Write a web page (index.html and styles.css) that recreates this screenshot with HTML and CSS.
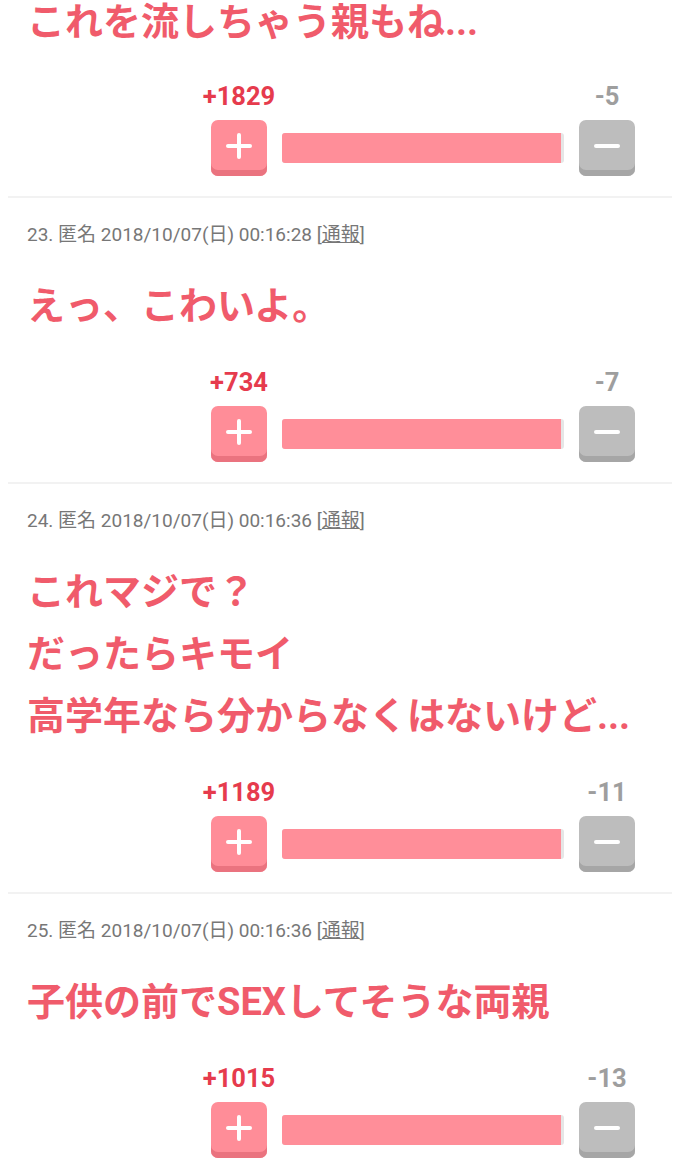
FILE: index.html
```html
<!DOCTYPE html>
<html lang="ja">
<head>
    <meta charset="UTF-8">
    <meta name="viewport" content="width=device-width, initial-scale=1.0">
    <title>コメント</title>
    <link rel="stylesheet" href="styles.css">
</head>
<body>

    <ul class="comments">

        <li class="comment comment-cut">
            <div class="body">これを流しちゃう親もね...</div>
            <div class="vote">
                <div class="vote-col">
                    <span class="count plus">+1829</span>
                    <button class="btn btn-plus"><span class="sign"></span></button>
                </div>
                <div class="bar"><div class="bar-fill" style="width: 99%"></div></div>
                <div class="vote-col">
                    <span class="count minus">-5</span>
                    <button class="btn btn-minus"><span class="sign"></span></button>
                </div>
            </div>
        </li>

        <li class="comment">
            <p class="meta">23. 匿名 2018/10/07(日) 00:16:28 [<a href="#">通報</a>]</p>
            <div class="body">えっ、こわいよ。</div>
            <div class="vote">
                <div class="vote-col">
                    <span class="count plus">+734</span>
                    <button class="btn btn-plus"><span class="sign"></span></button>
                </div>
                <div class="bar"><div class="bar-fill" style="width: 99%"></div></div>
                <div class="vote-col">
                    <span class="count minus">-7</span>
                    <button class="btn btn-minus"><span class="sign"></span></button>
                </div>
            </div>
        </li>

        <li class="comment">
            <p class="meta">24. 匿名 2018/10/07(日) 00:16:36 [<a href="#">通報</a>]</p>
            <div class="body">
                これマジで？<br>
                だったらキモイ<br>
                高学年なら分からなくはないけど...
            </div>
            <div class="vote">
                <div class="vote-col">
                    <span class="count plus">+1189</span>
                    <button class="btn btn-plus"><span class="sign"></span></button>
                </div>
                <div class="bar"><div class="bar-fill" style="width: 99%"></div></div>
                <div class="vote-col">
                    <span class="count minus">-11</span>
                    <button class="btn btn-minus"><span class="sign"></span></button>
                </div>
            </div>
        </li>

        <li class="comment">
            <p class="meta">25. 匿名 2018/10/07(日) 00:16:36 [<a href="#">通報</a>]</p>
            <div class="body">子供の前でSEXしてそうな両親</div>
            <div class="vote">
                <div class="vote-col">
                    <span class="count plus">+1015</span>
                    <button class="btn btn-plus"><span class="sign"></span></button>
                </div>
                <div class="bar"><div class="bar-fill" style="width: 99%"></div></div>
                <div class="vote-col">
                    <span class="count minus">-13</span>
                    <button class="btn btn-minus"><span class="sign"></span></button>
                </div>
            </div>
        </li>

    </ul>

</body>
</html>
```

FILE: styles.css
```css
body {
    background-color: #fff;
    margin: 0;
    font-family: Roboto, "Noto Sans CJK JP", sans-serif;
}

.comments {
    list-style: none;
    margin: 0 8px;
    padding: 0;
}

.comment {
    padding: 25px 0 20px 19px;
    border-bottom: 2px solid #f2f2f2;
}

.comment-cut {
    padding-top: 0;
}

.meta {
    margin: 0;
    font-size: 19px;
    line-height: 24px;
    color: #777;
}

.meta a {
    color: #777;
}

.body {
    margin: 28px 0 30px;
    font-family: Roboto, "Noto Sans CJK JP", sans-serif;
    font-weight: 700;
    font-size: 38px;
    line-height: 62px;
    color: #f05b6b;
}

.comment-cut .body {
    margin: 0 0 37px;
    line-height: 44px;
}

.vote {
    display: flex;
    align-items: flex-end;
    gap: 15px;
    width: 424px;
    margin-left: auto;
    margin-right: 37px;
}

.vote-col {
    width: 56px;
    flex-shrink: 0;
    display: flex;
    flex-direction: column;
    align-items: center;
    gap: 9px;
}

.count {
    font-family: Roboto, sans-serif;
    font-weight: 700;
    font-size: 25.5px;
    line-height: 30px;
    white-space: nowrap;
}

.count.plus {
    color: #e63b4d;
}

.count.minus {
    color: #9e9e9e;
}

.btn {
    position: relative;
    width: 56px;
    height: 56px;
    border: 0;
    border-radius: 7px;
    padding: 0;
}

.btn-plus {
    background-color: #ff8d98;
    box-shadow: inset 0 -6px 0 #ea737f;
}

.btn-minus {
    background-color: #bdbdbd;
    box-shadow: inset 0 -6px 0 #a6a6a6;
}

.sign {
    position: absolute;
    left: 15px;
    top: 24px;
    width: 26px;
    height: 3.5px;
    border-radius: 2px;
    background-color: #fff;
}

.btn-plus .sign::after {
    content: "";
    position: absolute;
    left: 11.25px;
    top: -11.25px;
    width: 3.5px;
    height: 26px;
    border-radius: 2px;
    background-color: #fff;
}

.bar {
    flex: 1;
    height: 30px;
    margin-bottom: 13px;
    border-radius: 3px;
    background-color: #e6e6e6;
    overflow: hidden;
}

.bar-fill {
    height: 100%;
    background-color: #ff8e99;
}
```
